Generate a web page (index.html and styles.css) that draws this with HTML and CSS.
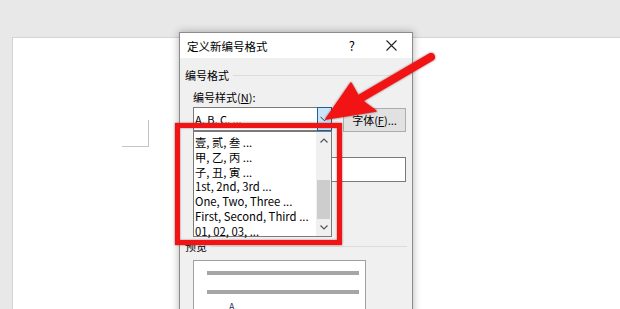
FILE: index.html
```html
<!DOCTYPE html>
<html lang="zh-CN">
<head>
  <meta charset="UTF-8" />
  <title>定义新编号格式</title>
  <link rel="stylesheet" href="styles.css">
</head>
<body>
  <div class="page">
    <div class="corner"></div>
  </div>

  <div class="dialog">
    <div class="titlebar">
      <span class="title">定义新编号格式</span>
      <span class="help">?</span>
      <svg class="close" width="11" height="11" viewBox="0 0 11 11">
        <path d="M0.5 0.5 L10.5 10.5 M10.5 0.5 L0.5 10.5" stroke="#222" stroke-width="1.1" fill="none"/>
      </svg>
    </div>

    <div class="dialog-body">
      <div class="section-head"><span>编号格式</span></div>
      <div class="group">
        <div class="label">编号样式(<u>N</u>):</div>
        <div class="combo-row">
          <div class="combo">
            <span class="combo-value">A, B, C, ...</span>
            <span class="combo-btn">
              <svg width="9" height="6" viewBox="0 0 9 6"><polyline points="0.5,0.8 4.5,4.8 8.5,0.8" stroke="#333" stroke-width="1" fill="none"/></svg>
            </span>
          </div>
          <button class="btn">字体(<u>F</u>)...</button>
        </div>

        <!-- label of this field is covered by the open list -->
        <div class="textbox"></div>
        <div class="combo small"></div>
      </div>

      <div class="section-head"><span>预览</span></div>
      <div class="preview">
        <div class="pv-line"></div>
        <div class="pv-line"></div>
        <div class="pv-num">A.</div>
      </div>
    </div>

    <div class="dropdown">
      <div class="dropdown-items">
        <div class="item">壹, 贰, 叁 ...</div>
        <div class="item">甲, 乙, 丙 ...</div>
        <div class="item">子, 丑, 寅 ...</div>
        <div class="item">1st, 2nd, 3rd ...</div>
        <div class="item">One, Two, Three ...</div>
        <div class="item">First, Second, Third ...</div>
        <div class="item">01, 02, 03, ...</div>
      </div>
      <div class="scrollbar">
        <div class="sb-btn">
          <svg width="8" height="5" viewBox="0 0 8 5"><polyline points="0.5,4.5 4,1 7.5,4.5" stroke="#555" stroke-width="1.2" fill="none"/></svg>
        </div>
        <div class="sb-track"><div class="sb-thumb"></div></div>
        <div class="sb-btn">
          <svg width="8" height="5" viewBox="0 0 8 5"><polyline points="0.5,0.5 4,4 7.5,0.5" stroke="#555" stroke-width="1.2" fill="none"/></svg>
        </div>
      </div>
    </div>
  </div>

  <!-- annotations drawn over the screenshot -->
  <div class="mark-box"></div>
  <svg class="mark-arrow" width="120" height="78" viewBox="0 0 120 78">
    <line x1="41" y1="50" x2="111" y2="9" stroke="#f21414" stroke-width="8" stroke-linecap="round"/>
    <path d="M6 71 L31 35 L40 51 L56 63 Z" fill="#f21414" stroke="#f21414" stroke-width="1.5" stroke-linejoin="round"/>
  </svg>
</body>
</html>
```

FILE: styles.css
```css
* {
  box-sizing: border-box;
}

body {
  margin: 0;
  height: 309px;
  overflow: hidden;
  position: relative;
  background-color: #e8e8e8;
  font-family: "Noto Sans CJK SC", sans-serif;
  font-size: 11px;
  color: #000;
}

.page {
  margin: 37px 0 0 12px;
  height: 272px;
  background-color: #fff;
  border-left: 1px solid #d4d4d4;
  border-top: 1px solid #d4d4d4;
}

.corner {
  margin-left: 109px;
  margin-top: 82px;
  width: 27px;
  height: 27px;
  border-right: 1px solid #c4c4c4;
  border-bottom: 1px solid #c4c4c4;
}

/* dialog window */
.dialog {
  position: absolute;
  left: 179px;
  top: 32px;
  width: 234px;
  height: 290px;
  background-color: #f0f0f0;
  border: 1px solid #8c8c8c;
  box-shadow: 0 0 8px rgba(0,0,0,0.3);
}

.titlebar {
  height: 25px;
  background-color: #fff;
  display: flex;
  align-items: center;
  padding-left: 7px;
}

.title {
  flex: 1;
  font-size: 11.5px;
}

.help {
  margin-right: 31px;
  font-size: 13px;
}

.close {
  margin-right: 15px;
}

.dialog-body {
  padding: 10px 5px 0 5px;
}

.section-head {
  display: flex;
  align-items: center;
  line-height: 14px;
  height: 14px;
}

.section-head::after {
  content: "";
  flex: 1;
  height: 1px;
  margin-left: 4px;
  background-color: #dcdcdc;
}

.group {
  padding-left: 8px;
  padding-bottom: 9px;
}

.label {
  line-height: 14px;
  margin-top: 8px;
  margin-bottom: 3px;
}

.combo-row {
  display: flex;
  align-items: flex-start;
  gap: 11px;
}

.combo {
  width: 139px;
  height: 24px;
  background-color: #fff;
  border: 1px solid #7a7a7a;
  display: flex;
  align-items: center;
}

.combo.small {
  width: 100px;
  margin-top: 24px;
}

.combo-value {
  flex: 1;
  padding-left: 1px;
}

.combo-btn {
  width: 15px;
  height: 24px;
  margin: -1px -1px -1px 0;
  background-color: #cce4f7;
  border: 1px solid #1c5f99;
  display: flex;
  align-items: center;
  justify-content: center;
}

.btn {
  margin-top: 1px;
  width: 63px;
  height: 24px;
  padding: 0;
  background-color: #e1e1e1;
  border: 1px solid #adadad;
  font-family: inherit;
  font-size: 11px;
  color: #000;
}

.textbox {
  margin-top: 25px;
  width: 213px;
  height: 25px;
  background-color: #fff;
  border: 1px solid #7a7a7a;
}

.preview {
  margin: 7px 0 0 8px;
  width: 173px;
  height: 60px;
  background-color: #fff;
  border: 1px solid #a0a0a0;
  padding: 10px 6px 0 13px;
}

.pv-line {
  height: 4px;
  background-color: #a6a6a6;
  margin-bottom: 15px;
}

.pv-num {
  margin-top: -9px;
  margin-left: 22px;
  font-size: 9px;
  color: #1f1f5f;
}

/* open drop-down list of the combo */
.dropdown {
  position: absolute;
  left: 13px;
  top: 98px;
  width: 139px;
  height: 106px;
  background-color: #fff;
  border: 1px solid #7a7a7a;
  display: flex;
}

.dropdown-items {
  flex: 1;
  padding: 3px 0 0 1px;
}

.item {
  font-size: 11.3px;
  line-height: 14.8px;
  white-space: nowrap;
}

.scrollbar {
  width: 15px;
  display: flex;
  flex-direction: column;
  background-color: #f0f0f0;
}

.sb-btn {
  height: 17px;
  display: flex;
  align-items: center;
  justify-content: center;
}

.sb-track {
  flex: 1;
  display: flex;
  flex-direction: column;
  justify-content: flex-end;
}

.sb-thumb {
  height: 39px;
  margin: 0 1px;
  background-color: #cdcdcd;
}

/* red annotations */
.mark-box {
  position: absolute;
  left: 175px;
  top: 123px;
  width: 167px;
  height: 122px;
  border: 5px solid #f21414;
  box-shadow: 0 0 2px rgba(90,0,0,0.6), inset 0 0 2px rgba(90,0,0,0.6);
}

.mark-arrow {
  position: absolute;
  left: 320px;
  top: 48px;
  filter: drop-shadow(0 0 1px rgba(90,0,0,0.6));
}
```
